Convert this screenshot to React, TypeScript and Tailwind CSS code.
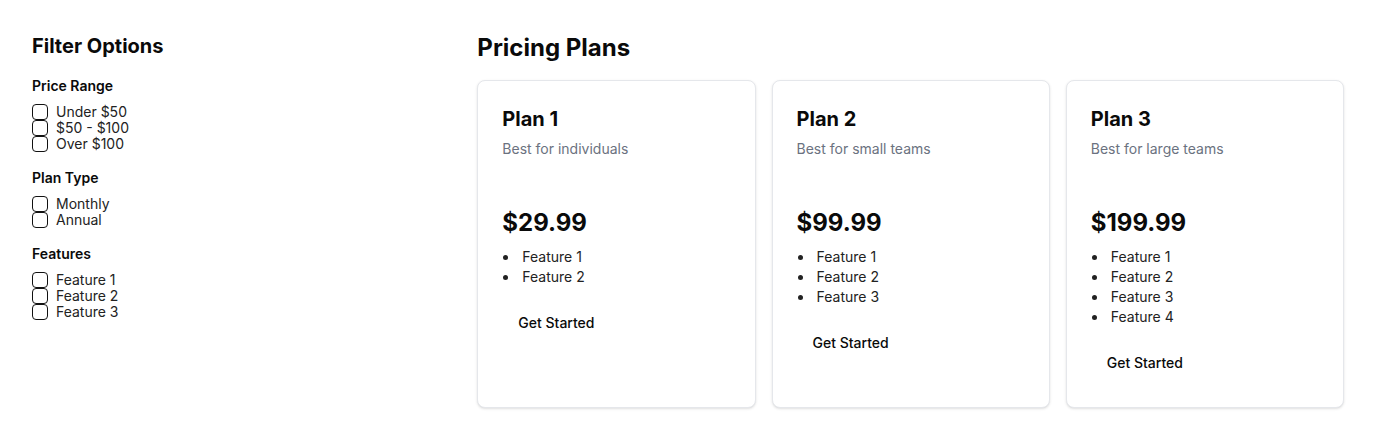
import React from "react";

const filters = [
  { title: "Price Range", items: ["Under $50", "$50 - $100", "Over $100"] },
  { title: "Plan Type", items: ["Monthly", "Annual"] },
  { title: "Features", items: ["Feature 1", "Feature 2", "Feature 3"] },
];

const plans = [
  { name: "Plan 1", desc: "Best for individuals", price: "$29.99", features: ["Feature 1", "Feature 2"] },
  { name: "Plan 2", desc: "Best for small teams", price: "$99.99", features: ["Feature 1", "Feature 2", "Feature 3"] },
  { name: "Plan 3", desc: "Best for large teams", price: "$199.99", features: ["Feature 1", "Feature 2", "Feature 3", "Feature 4"] },
];

export default function App() {
  return (
    <div
      className="min-h-[440px] bg-white p-8 text-[#0a0a0a]"
      style={{ fontFamily: "Inter, 'Noto Sans', sans-serif" }}
    >
      <div className="grid grid-cols-3 gap-6">
        <aside className="col-span-1">
          <h2 className="mb-4 text-xl font-bold leading-7">Filter Options</h2>
          <div className="flex flex-col gap-4">
            {filters.map((f) => (
              <div key={f.title}>
                <h3 className="mb-2 text-sm font-semibold leading-5">{f.title}</h3>
                <div className="flex flex-col">
                  {f.items.map((it) => (
                    <label key={it} className="flex h-4 items-center gap-2 text-sm leading-4 text-[#222]">
                      <input
                        type="checkbox"
                        className="h-4 w-4 shrink-0 appearance-none rounded-[4px] border border-[#111] bg-white"
                      />
                      <span>{it}</span>
                    </label>
                  ))}
                </div>
              </div>
            ))}
          </div>
        </aside>
        <main className="col-span-2">
          <h2 className="mb-4 text-2xl font-bold leading-8">Pricing Plans</h2>
          <div className="grid grid-cols-3 gap-4">
            {plans.map((p) => (
              <div key={p.name} className="rounded-lg border border-[#e5e7eb] bg-white p-6 shadow-sm">
                <h3 className="text-xl font-bold leading-7">{p.name}</h3>
                <p className="mt-1.5 text-sm leading-5 text-[#6b7280]">{p.desc}</p>
                <div className="mt-12 text-2xl font-bold leading-8">{p.price}</div>
                <ul className="mt-2 text-sm leading-5 text-[#222]">
                  {p.features.map((f) => (
                    <li key={f} className="flex items-center">
                      <span className="flex w-5 shrink-0 items-center">
                        <span className="ml-[1px] block h-[5px] w-[5px] rounded-full bg-[#222]" />
                      </span>
                      <span>{f}</span>
                    </li>
                  ))}
                </ul>
                <button className="mt-4 h-10 rounded-md px-4 py-2 text-sm font-medium text-[#0a0a0a]">
                  Get Started
                </button>
              </div>
            ))}
          </div>
        </main>
      </div>
    </div>
  );
}
